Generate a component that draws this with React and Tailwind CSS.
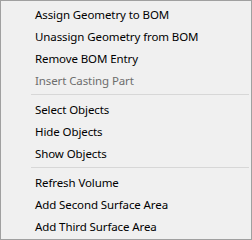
export default function App() {
  const groups = [
    [
      { t: "Assign Geometry to BOM" },
      { t: "Unassign Geometry from BOM" },
      { t: "Remove BOM Entry" },
      { t: "Insert Casting Part", d: true },
    ],
    [{ t: "Select Objects" }, { t: "Hide Objects" }, { t: "Show Objects" }],
    [
      { t: "Refresh Volume" },
      { t: "Add Second Surface Area" },
      { t: "Add Third Surface Area" },
    ],
  ];
  return (
    <div className="w-[252px] h-[240px] bg-[#f0f0f0] border border-[#a0a0a0] pt-[2px] pb-[2px] flex flex-col" style={{ fontFamily: '"Segoe UI", "Noto Sans", sans-serif' }}>
      {groups.map((g, gi) => (
        <div key={gi} className="flex flex-col">
          {gi > 0 && (
            <div className="h-[7px] flex items-center pl-[30px] pr-[2px]">
              <div className="h-px w-full bg-[#d7d7d7]" />
            </div>
          )}
          {g.map((it) => (
            <div
              key={it.t}
              className={`h-[22px] flex items-center pl-[34px] pt-px text-[11.5px] tracking-[-0.1px] leading-none ${it.d ? "text-[#6d6d6d]" : "text-black"}`}
            >
              {it.t}
            </div>
          ))}
        </div>
      ))}
    </div>
  );
}
